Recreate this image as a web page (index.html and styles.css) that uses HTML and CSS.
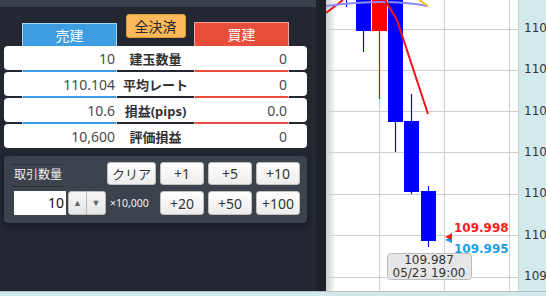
FILE: index.html
```html
<!DOCTYPE html>
<html>
<head>
    <title>Trade</title>
    <meta charset="UTF-8">
    <meta name="viewport" content="width=device-width, initial-scale=1.0">
<link rel="stylesheet" href="styles.css">
</head>
<body>

<div class="page">
    <div class="main">
        <aside class="panel">
            <div class="panel-inner">
                <div class="panel-top"></div>

                <section class="position">
                    <div class="side side-sell">売建</div>
                    <button class="close-all">全決済</button>
                    <div class="side side-buy">買建</div>

                    <div class="position-row">
                        <span class="val">10</span><span class="label">建玉数量</span><span class="val">0</span>
                    </div>
                    <div class="position-row">
                        <span class="val">110.104</span><span class="label">平均レート</span><span class="val">0</span>
                    </div>
                    <div class="position-row">
                        <span class="val">10.6</span><span class="label">損益(pips)</span><span class="val">0.0</span>
                    </div>
                    <div class="position-row">
                        <span class="val">10,600</span><span class="label">評価損益</span><span class="val">0</span>
                    </div>
                </section>

                <section class="order">
                    <div class="order-label">取引数量</div>
                    <span></span>
                    <button class="btn btn-clear">クリア</button>
                    <button class="btn">+1</button>
                    <button class="btn">+5</button>
                    <button class="btn">+10</button>

                    <div class="order-input">10</div>
                    <div class="spinner">
                        <button class="spin">&#9650;</button>
                        <button class="spin">&#9660;</button>
                    </div>
                    <div class="order-unit">×10,000</div>
                    <button class="btn">+20</button>
                    <button class="btn">+50</button>
                    <button class="btn">+100</button>
                </section>
            </div>
            <div class="panel-edge"></div>
        </aside>

        <div class="chart">
            <div class="plot">
                <svg width="193" height="291" viewBox="0 0 193 291">
                    <!-- grid -->
                    <g class="grid">
                        <line x1="0" x2="193" y1="29.5" y2="29.5"/>
                        <line x1="0" x2="193" y1="70.5" y2="70.5"/>
                        <line x1="0" x2="193" y1="111.5" y2="111.5"/>
                        <line x1="0" x2="193" y1="152.5" y2="152.5"/>
                        <line x1="0" x2="193" y1="194.5" y2="194.5"/>
                        <line x1="0" x2="193" y1="235.5" y2="235.5"/>
                        <line x1="0" x2="193" y1="277.5" y2="277.5"/>
                        <line x1="53.5" x2="53.5" y1="0" y2="291"/>
                        <line x1="118.5" x2="118.5" y1="0" y2="291"/>
                        <line x1="183.5" x2="183.5" y1="0" y2="291"/>
                        <line x1="192.5" x2="192.5" y1="0" y2="291"/>
                    </g>
                    <!-- candles -->
                    <g class="bear">
                        <line x1="20.5" x2="20.5" y1="0" y2="7"/>
                        <line x1="37.5" x2="37.5" y1="30" y2="52"/>
                        <rect x="30" y="-2" width="15" height="33"/>
                        <line x1="69.5" x2="69.5" y1="121" y2="152"/>
                        <rect x="62" y="-2" width="15" height="124"/>
                        <line x1="85.5" x2="85.5" y1="94" y2="194"/>
                        <rect x="78" y="121" width="15" height="71"/>
                        <line x1="102.5" x2="102.5" y1="186" y2="247"/>
                        <rect x="95" y="191" width="15" height="50"/>
                    </g>
                    <g class="bull">
                        <line x1="53.5" x2="53.5" y1="30" y2="99"/>
                        <rect x="46" y="-2" width="15" height="33"/>
                    </g>
                    <!-- averages -->
                    <path class="ma ma-red" d="M0,13 L17,0"/>
                    <path class="ma ma-blue" d="M0,6 Q60,-2 102,6"/>
                    <path class="ma ma-yellow" d="M93,0 L102,6"/>
                    <path class="ma ma-red" d="M59,0 L71,20 L102,114"/>
                    <!-- prices -->
                    <polygon class="mark-bid" points="119,240 126,236 126,243"/>
                    <polygon class="mark-ask" points="119,237 126,233 126,240"/>
                    <text class="price price-ask" x="128" y="232">109.998</text>
                    <text class="price price-bid" x="128" y="252.5">109.995</text>
                    <!-- tooltip -->
                    <rect class="tip" x="61.5" y="253.5" width="84" height="26" rx="3"/>
                    <text class="tip-text" x="103" y="263.5">109.987</text>
                    <text class="tip-text" x="103" y="276.5">05/23 19:00</text>
                </svg>
            </div>
            <div class="axis">
                <span>110.250</span>
                <span>110.200</span>
                <span>110.150</span>
                <span>110.100</span>
                <span>110.050</span>
                <span>110.000</span>
                <span>109.950</span>
            </div>
        </div>
    </div>
    <div class="status-strip"></div>
</div>

</body>
</html>
```

FILE: styles.css
```css
/* page */
    body{
        margin:0;
        background-color:#d2eaeb;
        font:normal 14px "Noto Sans", "Noto Sans CJK JP", sans-serif;
    }
    .page{
        display:flex;
        flex-direction:column;
        width:546px;
        height:296px;
        overflow:hidden;
    }
    .main{
        display:flex;
        height:291px;
    }
    .status-strip{
        height:4px;
        border-top:1px solid #b7c3c4;
        background-color:#d2e9ea;
    }
/* panel */
    .panel{
        flex:none;
        display:flex;
        width:326px;
        background-color:#222732;
    }
    .panel-inner{
        display:flex;
        flex-direction:column;
        width:316px;
    }
    .panel-edge{
        flex:1;
        background-color:#1d212a;
    }
    .panel-top{
        height:7px;
        background-color:#3b414a;
    }
/* position table */
    .position{
        display:grid;
        grid-template-columns:18px 95px 77px 95px 18px;
        grid-template-rows:30px repeat(4, 24px);
        row-gap:2px;
        margin:7px 9px 0 4px;
    }
    .position .side{
        grid-row:1 / 6;
        padding-top:2px;
        border:1px solid;
        color:#fff;
        text-align:center;
        font-size:14px;
        line-height:19px;
    }
    .position .side-sell{
        grid-column:2;
        margin-top:9px;
        background-color:#3d9de0;
        border-color:#a9d5f4;
    }
    .position .side-buy{
        grid-column:4;
        margin-top:8px;
        background-color:#e84d3c;
        border-color:#f3a397;
    }
    .position .close-all{
        grid-column:3;
        grid-row:1;
        justify-self:center;
        align-self:start;
        width:60px;
        height:24px;
        padding:0;
        background-color:#ffb85a;
        border:1px solid #e59a3a;
        border-radius:3px;
        color:#2a2a2a;
        font:inherit;
        font-size:14px;
    }
    .position .position-row{
        grid-column:1 / -1;
        display:grid;
        grid-template-columns:95px 77px 95px;
        align-items:center;
        padding:0 18px;
        background-color:#fff;
        border-radius:4px;
    }
    .position .position-row:nth-child(4){ grid-row:2; }
    .position .position-row:nth-child(5){ grid-row:3; }
    .position .position-row:nth-child(6){ grid-row:4; }
    .position .position-row:nth-child(7){ grid-row:5; }
    .position .val{
        padding-right:2px;
        text-align:right;
        color:#4a4a4a;
        font-size:14px;
    }
    .position .label{
        text-align:center;
        font-weight:bold;
        font-size:13px;
        color:#333;
    }
/* order card */
    .order{
        display:grid;
        grid-template-columns:54px 39px 49px 48px 48px 48px;
        grid-template-rows:23px 24px;
        row-gap:6px;
        margin:8px 9px 0 4px;
        padding:6px 7px 8px 10px;
        background-color:#3c434d;
        border-radius:4px;
        box-shadow:0 3px 6px rgba(0,0,0,.35);
    }
    .order .order-label{
        width:51px;
        height:23px;
        margin:2px 0 0 -2px;
        padding-left:2px;
        box-sizing:border-box;
        border-top:1px solid #2a2f38;
        border-bottom:1px solid #2a2f38;
        color:#eee;
        font-size:12px;
        line-height:20px;
        white-space:nowrap;
    }
    .order .btn{
        justify-self:end;
        width:44px;
        padding:0;
        background:linear-gradient(#fff, #ececec);
        border:1px solid #bfbfbf;
        border-radius:3px;
        color:#333;
        font:inherit;
        font-size:14px;
    }
    .order .btn-clear{
        justify-self:start;
        width:49px;
        font-size:13px;
    }
    .order .order-input{
        width:52px;
        padding-right:2px;
        box-sizing:border-box;
        background-color:#fff;
        text-align:right;
        color:#111;
        font-size:14px;
        line-height:24px;
    }
    .order .spinner{
        display:flex;
        width:38px;
    }
    .order .spin{
        width:19px;
        padding:0;
        background:linear-gradient(#f6f6f6, #e6e6e6);
        border:1px solid #bbb;
        color:#666;
        font-size:9px;
    }
    .order .spin:first-child{ border-radius:3px 0 0 3px; }
    .order .spin:last-child{ border-radius:0 3px 3px 0; border-left:none; }
    .order .order-unit{
        padding-left:3px;
        color:#f0f0f0;
        font-size:10.5px;
        line-height:24px;
        white-space:nowrap;
    }
/* chart */
    .chart{
        flex:1;
        min-width:0;
        display:flex;
    }
    .chart .plot{
        flex:none;
        width:193px;
        background:linear-gradient(to right, #cdcdcd, #fff 10px);
    }
    .chart .plot svg{
        display:block;
    }
    .chart .grid line{
        stroke:#cfcfcf;
        stroke-width:1;
    }
    .chart .bear line{ stroke:#0000ff; stroke-width:1.2; }
    .chart .bear rect{ fill:#0000ff; }
    .chart .bull line{ stroke:#ff0000; stroke-width:1.2; }
    .chart .bull rect{ fill:#ff0000; }
    .chart .ma{
        fill:none;
        stroke-width:2;
    }
    .chart .ma-red{ stroke:#ee1515; }
    .chart .ma-blue{ stroke:#8c8cf2; }
    .chart .ma-yellow{ stroke:#f3c21a; }
    .chart .mark-ask{ fill:#ff1a1a; }
    .chart .mark-bid{ fill:#1a9ee6; }
    .chart .price{
        font:bold 12px "DejaVu Sans", sans-serif;
    }
    .chart .price-ask{ fill:#ff1a1a; }
    .chart .price-bid{ fill:#1a9ee6; }
    .chart .tip{
        fill:#e6e6e6;
        stroke:#bcbcbc;
    }
    .chart .tip-text{
        fill:#333;
        text-anchor:middle;
        font:12px "DejaVu Sans", sans-serif;
    }
    .chart .axis{
        flex:1;
        min-width:0;
        display:flex;
        flex-direction:column;
        padding-top:8px;
        overflow:hidden;
        background-color:#d2eaeb;
        color:#333;
        font:12px "DejaVu Sans", sans-serif;
        white-space:nowrap;
    }
    .chart .axis span{
        height:41.33px;
        padding-left:5px;
        line-height:41.33px;
    }
```
